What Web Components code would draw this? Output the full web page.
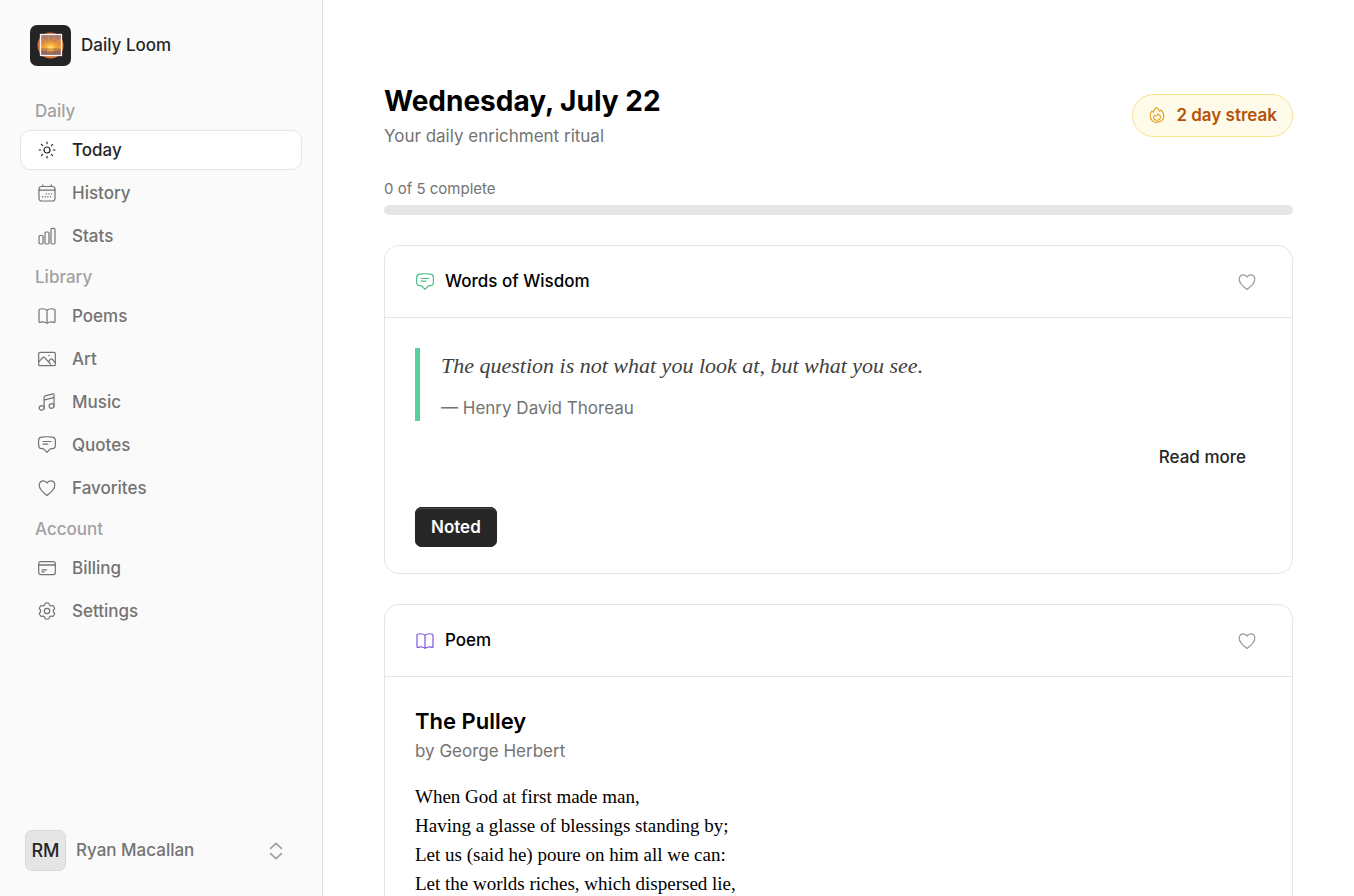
<!DOCTYPE html>
<html lang="en">
<head>
<meta charset="utf-8">
<meta name="viewport" content="width=device-width, initial-scale=1">
<title>Daily Loom</title>
<style>
    body {
        margin: 0;
        background: #fff;
        color: #0a0a0a;
        font: 500 17px/25px Inter, "Liberation Sans", sans-serif;
    }
</style>
</head>
<body>
<loom-app>
    <loom-sidebar slot="sidebar">
        <nav-group label="Daily">
            <nav-item icon="sun" href="#today" active>Today</nav-item>
            <nav-item icon="calendar" href="#history">History</nav-item>
            <nav-item icon="bars" href="#stats">Stats</nav-item>
        </nav-group>
        <nav-group label="Library">
            <nav-item icon="book" href="#poems">Poems</nav-item>
            <nav-item icon="image" href="#art">Art</nav-item>
            <nav-item icon="music" href="#music">Music</nav-item>
            <nav-item icon="quote" href="#quotes">Quotes</nav-item>
            <nav-item icon="heart" href="#favorites">Favorites</nav-item>
        </nav-group>
        <nav-group label="Account">
            <nav-item icon="card" href="#billing">Billing</nav-item>
            <nav-item icon="gear" href="#settings">Settings</nav-item>
        </nav-group>
        <user-menu slot="footer" initials="RM">Ryan Macallan</user-menu>
    </loom-sidebar>

    <page-header>
        Wednesday, July 22
        <span slot="subtitle">Your daily enrichment ritual</span>
        <streak-badge slot="badge">2 day streak</streak-badge>
    </page-header>
    <ritual-progress done="0" total="5"></ritual-progress>
    <ritual-card icon="quote" color="#4fba8a" heading="Words of Wisdom">
        <wisdom-quote author="Henry David Thoreau">The question is not what you look at, but what you see.</wisdom-quote>
    </ritual-card>
    <ritual-card icon="book" color="#7f56d9" heading="Poem">
        <poem-text heading="The Pulley" author="George Herbert">When God at first made man,
Having a glasse of blessings standing by;
Let us (said he) poure on him all we can:
Let the worlds riches, which dispersed lie,</poem-text>
    </ritual-card>
</loom-app>

<script>
// All icons share a 20x20 grid and take the current text colour
const ICONS = {
    sun: '<circle cx="10" cy="10" r="3"/><path d="M10 2v1.7M10 16.3V18M2 10h1.7M16.3 10H18M4.4 4.4l1.2 1.2M14.4 14.4l1.2 1.2M4.4 15.6l1.2-1.2M14.4 5.6l1.2-1.2"/>',
    calendar: '<rect x="2" y="3.5" width="16" height="14.5" rx="2.5"/><path d="M5.8 1.8v1.7M14.2 1.8v1.7M2 7.2h16"/><path d="M9.3 10.9h.1M11.9 10.9h.1M14.5 10.9h.1M5.6 13.8h.1M8.2 13.8h.1M10.8 13.8h.1M13.4 13.8h.1" stroke-width="1.4"/>',
    bars: '<rect x="2" y="9.5" width="4" height="8.5" rx="1.2"/><rect x="8" y="6" width="4" height="12" rx="1.2"/><rect x="14" y="2.3" width="4" height="15.7" rx="1.2"/>',
    book: '<path d="M10 4.2C8 2.7 5 2.5 2.6 3.3a.9.9 0 0 0-.6.8v11.7c0 .4.3.6.7.5 2.4-.7 5.2-.4 7.3 1 2.1-1.4 4.9-1.7 7.3-1 .4.1.7-.1.7-.5V4.1a.9.9 0 0 0-.6-.8C15 2.5 12 2.7 10 4.2zM10 4.2v13.1"/>',
    image: '<rect x="1.7" y="3.3" width="16.6" height="13.4" rx="1.3"/><path d="M2 12.6l3.4-3.8c.8-.9 1.700-.9 2.500 0l5.600 6.200M11.400 12.800l1.700-2.100c.8-1 1.800-1 2.600 0l2.300 2.600"/><path d="M12 6.600h.1" stroke-width="1.500"/>',
    music: '<path d="M7.100 15.800V5.400c0-.8.4-1.300 1.100-1.500l7.700-2.100c.6-.2 1.100.2 1.100.8v11.300M7.100 8.200L17 5.400"/><ellipse cx="4.700" cy="15.900" rx="2.500" ry="2.200" transform="rotate(-18 4.700 15.900)"/><ellipse cx="14.600" cy="14" rx="2.500" ry="2.200" transform="rotate(-18 14.600 14)"/>',
    quote: '<path d="M4.400 2.200c3.700-.6 7.500-.6 11.200 0 1.600.2 2.600 1.300 2.700 2.800.2 2 .2 4 0 6-.1 1.500-1.100 2.500-2.700 2.600l-2.300.2L10 17.400l-3.300-3.600-2.300-.2c-1.600-.1-2.600-1.100-2.700-2.600-.2-2-.2-4 0-6 .1-1.500 1.100-2.600 2.700-2.800z"/><path d="M6.100 6.500h7.800M6.100 9.200h4.700"/>',
    heart: '<path d="M10 17.500C6 14.600 2.200 11.500 2.200 7.300 2.200 4.500 4.100 2.800 6.300 2.800c1.700 0 3 .8 3.700 2.300.7-1.500 2-2.300 3.700-2.300 2.200 0 4.100 1.700 4.100 4.500 0 4.200-3.800 7.300-7.800 10.200z"/>',
    card: '<rect x="1.700" y="3.600" width="16.600" height="13" rx="2"/><path d="M1.700 7h16.600" stroke-width="1.400"/><path d="M4.900 11.800h4.700M4.900 13.800h2.200" stroke-width="1.200"/>',
    gear: '<g transform="translate(10 10)"><path d="M-1.900-7.800Q0-8.600 1.900-7.800Q2.350-4.070 5.800-5.550Q7.450-4.300 7.700-2.250Q4.700 0 7.700 2.250Q7.450 4.300 5.800 5.550Q2.350 4.070 1.900 7.800Q0 8.600-1.900 7.800Q-2.350 4.070-5.800 5.550Q-7.450 4.300-7.700 2.250Q-4.700 0-7.700-2.250Q-7.450-4.300-5.800-5.550Q-2.350-4.070-1.900-7.800z"/><circle r="2.700"/></g>',
    flame: '<path d="M9.500 1.700c1.800.9 2.700 2.200 2.900 4.200.7-.3 1.200-.8 1.500-1.500 2.300 1.600 3.700 3.600 3.700 6.300 0 4.300-3.400 7.500-7.600 7.500s-7.600-3-7.600-7.400c0-2.200.8-4 1.900-5.200.5.8 1 1.200 1.800 1.400.1-2.100 1.200-4.100 3.400-5.300z"/><path d="M10.700 8.800c2.100.5 3.100 1.800 3.100 3.500 0 2-1.700 3.500-3.800 3.500s-3.800-1.400-3.800-3.300c0-1 .4-1.700 1-2.300.7.9 1.600 1.200 2.500.8.700-.4 1-1.200 1-2.200z"/>',
    chevrons: '<path d="M4 7l6-5.500L16 7M4 13l6 5.500 6-5.500" stroke-width="2"/>'
};

class LoomIcon extends HTMLElement {
    constructor() {
        super();
        this.attachShadow({ mode: 'open' });
    }

    connectedCallback() {
        this.shadowRoot.innerHTML = `
            <style>
                :host {
                    display: block;
                    flex: none;
                    width: 20px;
                    height: 20px;
                }
                svg {
                    display: block;
                    width: 100%;
                    height: 100%;
                }
            </style>
            <svg viewBox="0 0 20 20" fill="none" stroke="currentColor" stroke-width="1.2"
                 stroke-linecap="round" stroke-linejoin="round" aria-hidden="true">${ICONS[this.getAttribute('name')]}</svg>
        `;
    }
}

class LoomApp extends HTMLElement {
    constructor() {
        super();
        this.attachShadow({ mode: 'open' });
        this.shadowRoot.innerHTML = `
            <style>
                :host {
                    display: flex;
                    height: 100vh;
                }
                main {
                    flex: 1;
                    min-width: 0;
                    box-sizing: border-box;
                    padding: 81px 61px;
                    display: flex;
                    flex-direction: column;
                    gap: 30px;
                    overflow-y: auto;
                    scrollbar-width: none;
                }
            </style>
            <slot name="sidebar"></slot>
            <main><slot></slot></main>
        `;
    }
}

class LoomSidebar extends HTMLElement {
    constructor() {
        super();
        this.attachShadow({ mode: 'open' });
        this.shadowRoot.innerHTML = `
            <style>
                :host {
                    display: flex;
                    flex: none;
                    flex-direction: column;
                    box-sizing: border-box;
                    width: 323px;
                    padding: 25px 20px;
                    background: #fafafa;
                    border-right: 1px solid #dedede;
                }
                .brand {
                    display: flex;
                    align-items: center;
                    gap: 10px;
                    margin: 0 10px 24px;
                    color: #262626;
                    text-decoration: none;
                }
                .brand svg {
                    width: 41px;
                    height: 41px;
                }
                nav {
                    flex: 1;
                }
            </style>
            <a class="brand" href="#home">
                <svg viewBox="0 0 41 41" aria-hidden="true">
                    <defs>
                        <linearGradient id="sky" x1="0" y1="0" x2="0" y2="1">
                            <stop offset="0" stop-color="#9a7480"/>
                            <stop offset=".35" stop-color="#d98743"/>
                            <stop offset=".6" stop-color="#eda13d"/>
                            <stop offset=".75" stop-color="#a97057"/>
                            <stop offset="1" stop-color="#776270"/>
                        </linearGradient>
                        <radialGradient id="glow">
                            <stop offset="0" stop-color="#fff09a"/>
                            <stop offset=".35" stop-color="#fdbc3c"/>
                            <stop offset="1" stop-color="#ed872f" stop-opacity="0"/>
                        </radialGradient>
                    </defs>
                    <rect width="41" height="41" rx="7" fill="#242424"/>
                    <circle cx="20.5" cy="20.5" r="13" fill="#d9713b"/>
                    <rect x="10" y="10" width="21" height="21" fill="url(#sky)"/>
                    <ellipse cx="20.5" cy="22" rx="10" ry="7" fill="url(#glow)"/>
                    <path d="M20.5 22L12 13M20.5 22L18 11M20.5 22L25 11M20.5 22L30 15" stroke="#fbb65a" stroke-width=".7" opacity=".6"/>
                    <path d="M11 24h19M11 27h19M16 23v7M25 23v7" stroke="#6b5260" stroke-width=".7" opacity=".6"/>
                    <rect x="10.5" y="9.5" width="21" height="21" fill="none" stroke="#fdf4ee" stroke-width="1.3"/>
                </svg>
                <span>Daily Loom</span>
            </a>
            <nav><slot></slot></nav>
            <slot name="footer"></slot>
        `;
    }
}

class NavGroup extends HTMLElement {
    constructor() {
        super();
        this.attachShadow({ mode: 'open' });
    }

    connectedCallback() {
        this.shadowRoot.innerHTML = `
            <style>
                :host {
                    display: block;
                }
                h2 {
                    margin: 0;
                    padding: 2px 15px 0;
                    color: #a1a1a1;
                    font: inherit;
                    line-height: 38px;
                }
                div {
                    display: flex;
                    flex-direction: column;
                    gap: 3px;
                }
            </style>
            <h2>${this.getAttribute('label')}</h2>
            <div><slot></slot></div>
        `;
    }
}

class NavItem extends HTMLElement {
    constructor() {
        super();
        this.attachShadow({ mode: 'open' });
    }

    connectedCallback() {
        const current = this.hasAttribute('active') ? 'aria-current="page"' : '';
        this.shadowRoot.innerHTML = `
            <style>
                :host {
                    display: block;
                }
                a {
                    display: flex;
                    align-items: center;
                    gap: 15px;
                    box-sizing: border-box;
                    height: 40px;
                    padding: 0 16px;
                    border: 1px solid transparent;
                    border-radius: 10px;
                    color: #737373;
                    text-decoration: none;
                }
                a:hover {
                    color: #262626;
                }
                a[aria-current] {
                    background: #fff;
                    border-color: #e5e5e5;
                    color: #262626;
                }
            </style>
            <a href="${this.getAttribute('href')}" ${current}>
                <loom-icon name="${this.getAttribute('icon')}"></loom-icon>
                <slot></slot>
            </a>
        `;
    }
}

class UserMenu extends HTMLElement {
    constructor() {
        super();
        this.attachShadow({ mode: 'open' });
    }

    connectedCallback() {
        this.shadowRoot.innerHTML = `
            <style>
                :host {
                    display: block;
                }
                button {
                    display: flex;
                    align-items: center;
                    gap: 10px;
                    width: 100%;
                    padding: 0 16px 0 5px;
                    border: none;
                    background: none;
                    color: #737373;
                    font: inherit;
                    text-align: left;
                    cursor: pointer;
                }
                .avatar {
                    box-sizing: border-box;
                    width: 41px;
                    border: 1px solid #d9d9d9;
                    border-radius: 7px;
                    background: #e5e5e5;
                    color: #262626;
                    font-size: 18px;
                    line-height: 39px;
                    text-align: center;
                }
                .name {
                    flex: 1;
                }
                loom-icon {
                    height: 18px;
                    color: #a1a1a1;
                }
            </style>
            <button type="button" aria-haspopup="menu">
                <span class="avatar">${this.getAttribute('initials')}</span>
                <span class="name"><slot></slot></span>
                <loom-icon name="chevrons"></loom-icon>
            </button>
        `;
    }
}

class PageHeader extends HTMLElement {
    constructor() {
        super();
        this.attachShadow({ mode: 'open' });
        this.shadowRoot.innerHTML = `
            <style>
                :host {
                    display: flex;
                    flex: none;
                    align-items: center;
                    justify-content: space-between;
                }
                h1 {
                    margin: 0 0 3px;
                    color: #000;
                    font-size: 28px;
                    font-weight: 700;
                    line-height: 40px;
                }
                p {
                    margin: 0;
                    color: #737373;
                    font-weight: 400;
                }
            </style>
            <div>
                <h1><slot></slot></h1>
                <p><slot name="subtitle"></slot></p>
            </div>
            <slot name="badge"></slot>
        `;
    }
}

class StreakBadge extends HTMLElement {
    constructor() {
        super();
        this.attachShadow({ mode: 'open' });
        this.shadowRoot.innerHTML = `
            <style>
                :host {
                    display: flex;
                    align-items: center;
                    gap: 10px;
                    box-sizing: border-box;
                    height: 43px;
                    padding: 0 15px;
                    border: 1px solid #f8e28a;
                    border-radius: 22px;
                    background: #fffbeb;
                    color: #b45309;
                    font-weight: 600;
                }
                loom-icon {
                    width: 18px;
                    height: 18px;
                    color: #e0a020;
                }
            </style>
            <loom-icon name="flame"></loom-icon>
            <slot></slot>
        `;
    }
}

class RitualProgress extends HTMLElement {
    constructor() {
        super();
        this.attachShadow({ mode: 'open' });
    }

    connectedCallback() {
        const done = Number(this.getAttribute('done'));
        const total = Number(this.getAttribute('total'));
        this.shadowRoot.innerHTML = `
            <style>
                :host {
                    display: block;
                    flex: none;
                }
                label {
                    display: block;
                    margin-bottom: 6px;
                    color: #737373;
                    font-size: 15px;
                    font-weight: 400;
                    line-height: 20px;
                }
                progress {
                    display: block;
                    width: 100%;
                    height: 10px;
                    border: none;
                    border-radius: 5px;
                    overflow: hidden;
                    appearance: none;
                    background: #e5e5e5;
                }
                progress::-webkit-progress-bar {
                    background: #e5e5e5;
                }
                progress::-webkit-progress-value {
                    background: #262626;
                }
            </style>
            <label for="bar">${done} of ${total} complete</label>
            <progress id="bar" value="${done}" max="${total}"></progress>
        `;
    }
}

class RitualCard extends HTMLElement {
    constructor() {
        super();
        this.attachShadow({ mode: 'open' });
    }

    connectedCallback() {
        this.shadowRoot.innerHTML = `
            <style>
                :host {
                    display: block;
                    flex: none;
                    border: 1px solid #e5e5e5;
                    border-radius: 15px;
                }
                header {
                    display: flex;
                    align-items: center;
                    gap: 10px;
                    height: 71px;
                    padding: 0 30px;
                    border-bottom: 1px solid #e5e5e5;
                }
                h2 {
                    flex: 1;
                    margin: 0;
                    color: #000;
                    font: inherit;
                }
                button {
                    padding: 5px;
                    border: none;
                    background: none;
                    color: #999;
                    cursor: pointer;
                }
                button[aria-pressed="true"] {
                    color: #e11d48;
                }
                .body {
                    padding: 30px 30px 26px;
                }
            </style>
            <header>
                <loom-icon name="${this.getAttribute('icon')}" style="color: ${this.getAttribute('color')}"></loom-icon>
                <h2>${this.getAttribute('heading')}</h2>
                <button type="button" aria-label="Favorite" aria-pressed="false"><loom-icon name="heart"></loom-icon></button>
            </header>
            <div class="body"><slot></slot></div>
        `;

        const button = this.shadowRoot.querySelector('button');
        button.addEventListener('click', () => {
            button.setAttribute('aria-pressed', button.getAttribute('aria-pressed') !== 'true');
        });
    }
}

class WisdomQuote extends HTMLElement {
    constructor() {
        super();
        this.attachShadow({ mode: 'open' });
    }

    connectedCallback() {
        this.shadowRoot.innerHTML = `
            <style>
                :host {
                    display: flex;
                    flex-direction: column;
                    align-items: flex-start;
                }
                blockquote {
                    margin: 0 0 16px;
                    padding-left: 21px;
                    border-left: 5px solid #57d19b;
                }
                p {
                    margin: 0 0 12px;
                    color: #404040;
                    font: italic 400 22px/36px Georgia, "Liberation Serif", serif;
                }
                cite {
                    display: block;
                    color: #737373;
                    font-style: normal;
                    font-weight: 400;
                }
                button {
                    height: 40px;
                    padding: 0 16px;
                    border: none;
                    border-radius: 7px;
                    font: inherit;
                    cursor: pointer;
                }
                .more {
                    align-self: flex-end;
                    margin-bottom: 30px;
                    background: none;
                    color: #262626;
                }
                .done {
                    background: #262626;
                    box-shadow: inset 0 0 0 1px #262626, inset 0 2px 0 #4a4a4a;
                    color: #fff;
                    font-weight: 600;
                }
            </style>
            <blockquote>
                <p><slot></slot></p>
                <cite>— ${this.getAttribute('author')}</cite>
            </blockquote>
            <button type="button" class="more">Read more</button>
            <button type="button" class="done">Noted</button>
        `;
    }
}

class PoemText extends HTMLElement {
    constructor() {
        super();
        this.attachShadow({ mode: 'open' });
    }

    connectedCallback() {
        this.shadowRoot.innerHTML = `
            <style>
                :host {
                    display: block;
                }
                h3 {
                    margin: 0 0 4px;
                    color: #000;
                    font-size: 22px;
                    font-weight: 600;
                    line-height: 28px;
                }
                p {
                    margin: 0 0 18px;
                    color: #737373;
                    font-weight: 400;
                }
                .lines {
                    color: #000;
                    font: 400 19px/29px Georgia, "Liberation Serif", serif;
                    white-space: pre-line;
                }
            </style>
            <h3>${this.getAttribute('heading')}</h3>
            <p>by ${this.getAttribute('author')}</p>
            <div class="lines"><slot></slot></div>
        `;
    }
}

customElements.define('loom-icon', LoomIcon);
customElements.define('loom-app', LoomApp);
customElements.define('loom-sidebar', LoomSidebar);
customElements.define('nav-group', NavGroup);
customElements.define('nav-item', NavItem);
customElements.define('user-menu', UserMenu);
customElements.define('page-header', PageHeader);
customElements.define('streak-badge', StreakBadge);
customElements.define('ritual-progress', RitualProgress);
customElements.define('ritual-card', RitualCard);
customElements.define('wisdom-quote', WisdomQuote);
customElements.define('poem-text', PoemText);
</script>
</body>
</html>
